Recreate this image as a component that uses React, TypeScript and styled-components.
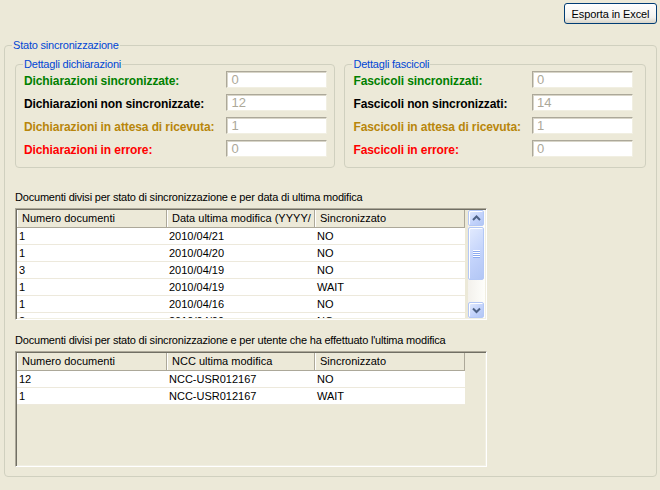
import React from "react";
import styled, { createGlobalStyle } from "styled-components";

const GlobalStyle = createGlobalStyle`
  *, *::before, *::after {
    box-sizing: border-box;
  }
  body {
    margin: 0;
    background: #ece9d8;
    font-family: "Liberation Sans", Arial, sans-serif;
    font-size: 11px;
    color: #000;
  }
`;

type Row = [string, string, string];

const byDate: Row[] = [
  ["1", "2010/04/21", "NO"],
  ["1", "2010/04/20", "NO"],
  ["3", "2010/04/19", "NO"],
  ["1", "2010/04/19", "WAIT"],
  ["1", "2010/04/16", "NO"],
  ["2", "2010/04/09", "NO"],
];

const byUser: Row[] = [
  ["12", "NCC-USR012167", "NO"],
  ["1", "NCC-USR012167", "WAIT"],
];

const COLORS = {
  ok: "#008000",
  plain: "#000000",
  wait: "#b8860b",
  error: "#ff0000",
};

export default function App() {
  return (
    <>
      <GlobalStyle />
      <Page>
        <Toolbar>
          <Button>Esporta in Excel</Button>
        </Toolbar>

        <OuterGroup>
          <Legend $shift={-3}>Stato sincronizzazione</Legend>

          <DetailsRow>
            <DetailGroup $width={322} $padRight={7}>
              <Legend $shift={-1}>Dettagli dichiarazioni</Legend>
              <Counters>
                <CounterLabel $color={COLORS.ok}>Dichiarazioni sincronizzate:</CounterLabel>
                <CountBox readOnly value="0" />
                <CounterLabel $color={COLORS.plain}>Dichiarazioni non sincronizzate:</CounterLabel>
                <CountBox readOnly value="12" />
                <CounterLabel $color={COLORS.wait}>Dichiarazioni in attesa di ricevuta:</CounterLabel>
                <CountBox readOnly value="1" />
                <CounterLabel $color={COLORS.error}>Dichiarazioni in errore:</CounterLabel>
                <CountBox readOnly value="0" />
              </Counters>
            </DetailGroup>

            <DetailGroup $width={303} $padRight={12}>
              <Legend $shift={-1}>Dettagli fascicoli</Legend>
              <Counters>
                <CounterLabel $color={COLORS.ok}>Fascicoli sincronizzati:</CounterLabel>
                <CountBox readOnly value="0" />
                <CounterLabel $color={COLORS.plain}>Fascicoli non sincronizzati:</CounterLabel>
                <CountBox readOnly value="14" />
                <CounterLabel $color={COLORS.wait}>Fascicoli in attesa di ricevuta:</CounterLabel>
                <CountBox readOnly value="1" />
                <CounterLabel $color={COLORS.error}>Fascicoli in errore:</CounterLabel>
                <CountBox readOnly value="0" />
              </Counters>
            </DetailGroup>
          </DetailsRow>

          <Caption $top={23}>
            Documenti divisi per stato di sincronizzazione e per data di ultima modifica
          </Caption>
          <ListView $height={112}>
            <ListArea>
              <HeaderRow>
                <HeaderCell>Numero documenti</HeaderCell>
                <HeaderCell>Data ultima modifica (YYYY/</HeaderCell>
                <HeaderCell>Sincronizzato</HeaderCell>
              </HeaderRow>
              {byDate.map((r, i) => (
                <BodyRow key={i}>
                  <Cell>{r[0]}</Cell>
                  <Cell>{r[1]}</Cell>
                  <Cell>{r[2]}</Cell>
                </BodyRow>
              ))}
            </ListArea>
            <ScrollBar>
              <ScrollButton>
                <svg width="13" height="12" viewBox="0 0 13 12">
                  <path d="M3 8 L6.5 4.5 L10 8" fill="none" stroke="#4d6185" strokeWidth="2" />
                </svg>
              </ScrollButton>
              <Thumb />
              <Track />
              <ScrollButton>
                <svg width="13" height="12" viewBox="0 0 13 12">
                  <path d="M3 4.5 L6.5 8 L10 4.5" fill="none" stroke="#4d6185" strokeWidth="2" />
                </svg>
              </ScrollButton>
            </ScrollBar>
          </ListView>

          <Caption $top={14}>
            Documenti divisi per stato di sincronizzazione e per utente che ha effettuato l'ultima modifica
          </Caption>
          <ListView $height={116}>
            <ListArea>
              <HeaderRow>
                <HeaderCell>Numero documenti</HeaderCell>
                <HeaderCell>NCC ultima modifica</HeaderCell>
                <HeaderCell>Sincronizzato</HeaderCell>
              </HeaderRow>
              {byUser.map((r, i) => (
                <BodyRow key={i}>
                  <Cell>{r[0]}</Cell>
                  <Cell>{r[1]}</Cell>
                  <Cell>{r[2]}</Cell>
                </BodyRow>
              ))}
            </ListArea>
          </ListView>
        </OuterGroup>
      </Page>
    </>
  );
}

const Page = styled.div`
  width: 660px;
  height: 490px;
  padding: 3px 3px 0 4px;
`;

const Toolbar = styled.div`
  display: flex;
  justify-content: flex-end;
`;

const Button = styled.button`
  width: 93px;
  height: 21px;
  padding: 0;
  border: 1px solid #003c74;
  border-radius: 3px;
  background: linear-gradient(#ffffff, #f3f2ee 70%, #d8d4c8);
  font-family: "Liberation Sans", Arial, sans-serif;
  font-size: 11px;
  letter-spacing: -0.1px;
  color: #000;
`;

const OuterGroup = styled.fieldset`
  margin: 15px 0 0;
  min-width: 0;
  width: 100%;
  padding: 6px 10px 9px 10px;
  border: 1px solid #d0d0bf;
  border-radius: 4px;
`;

const Legend = styled.legend<{ $shift: number }>`
  margin-left: ${(p) => p.$shift}px;
  padding: 0 1px;
  color: #0046d5;
  font-size: 11px;
  line-height: 13px;
  letter-spacing: -0.2px;
`;

const DetailsRow = styled.div`
  display: flex;
  gap: 9px;
`;

const DetailGroup = styled.fieldset<{ $width: number; $padRight: number }>`
  margin: 0;
  min-width: 0;
  width: ${(p) => p.$width}px;
  padding: 0 ${(p) => p.$padRight}px 10px 8px;
  border: 1px solid #d0d0bf;
  border-radius: 4px;
`;

const Counters = styled.div`
  display: grid;
  grid-template-columns: 1fr 101px;
  grid-auto-rows: 17px;
  row-gap: 6px;
  align-items: center;
`;

const CounterLabel = styled.span<{ $color: string }>`
  color: ${(p) => p.$color};
  font-size: 12px;
  font-weight: 700;
  letter-spacing: -0.1px;
  white-space: nowrap;
  padding-top: 2px;
`;

const CountBox = styled.input`
  width: 101px;
  height: 17px;
  margin: 0;
  padding: 0 0 0 4px;
  border: 1px solid;
  border-color: #aca899 #f1efe2 #f1efe2 #aca899;
  box-shadow: inset 1px 1px 0 #d8d5c8;
  background: #ffffff;
  color: #aca899;
  font-family: "Liberation Sans", Arial, sans-serif;
  font-size: 13px;
  line-height: 15px;
  outline: none;
`;

const Caption = styled.div<{ $top: number }>`
  margin: ${(p) => p.$top}px 0 4px;
  line-height: 13px;
  letter-spacing: -0.2px;
  white-space: nowrap;
`;

const ListView = styled.div<{ $height: number }>`
  display: flex;
  width: 472px;
  height: ${(p) => p.$height}px;
  padding: 1px;
  border: 1px solid;
  border-color: #aca899 #ffffff #ffffff #aca899;
  box-shadow: inset 1px 1px 0 #716f64, inset -1px -1px 0 #f1efe2;
  background: #ece9d8;
  overflow: hidden;
`;

const ListArea = styled.div`
  flex: 1;
  min-width: 0;
  overflow: hidden;
`;

const HeaderRow = styled.div`
  display: grid;
  grid-template-columns: 150px 148px 150px;
  width: 448px;
  height: 18px;
  border-bottom: 1px solid #aca899;
  background: #ece9d8;
`;

const HeaderCell = styled.div`
  padding-left: 5px;
  border-right: 1px solid #aca899;
  box-shadow: inset 1px 0 0 #ffffff;
  line-height: 17px;
  white-space: nowrap;
  overflow: hidden;
`;

const BodyRow = styled.div`
  display: grid;
  grid-template-columns: 150px 148px 150px;
  width: 448px;
  height: 17px;
  border-bottom: 1px solid #ede9dc;
  background: #ffffff;
`;

const Cell = styled.div`
  padding-left: 2px;
  line-height: 16px;
  white-space: nowrap;
  overflow: hidden;
`;

const ScrollBar = styled.div`
  display: flex;
  flex-direction: column;
  flex: none;
  width: 17px;
  padding-right: 1px;
  background: linear-gradient(to right, #f3f1ec, #fefefb);
`;

const blueFace = `
  border: 1px solid #b4c8f6;
  border-radius: 2px;
  background: linear-gradient(135deg, #e3ebfe, #c3d3fb 55%, #b2c6f5);
  box-shadow: inset 1px 1px 0 #ffffff;
`;

const ScrollButton = styled.div`
  ${blueFace}
  display: flex;
  align-items: center;
  justify-content: center;
  height: 16px;
`;

const Thumb = styled.div`
  ${blueFace}
  position: relative;
  height: 53px;
  margin-top: 1px;

  &::after {
    content: "";
    position: absolute;
    left: 4px;
    top: 22px;
    width: 7px;
    height: 8px;
    background: repeating-linear-gradient(#ffffff 0 1px, #8cabf0 1px 2px);
  }
`;

const Track = styled.div`
  flex: 1;
`;
